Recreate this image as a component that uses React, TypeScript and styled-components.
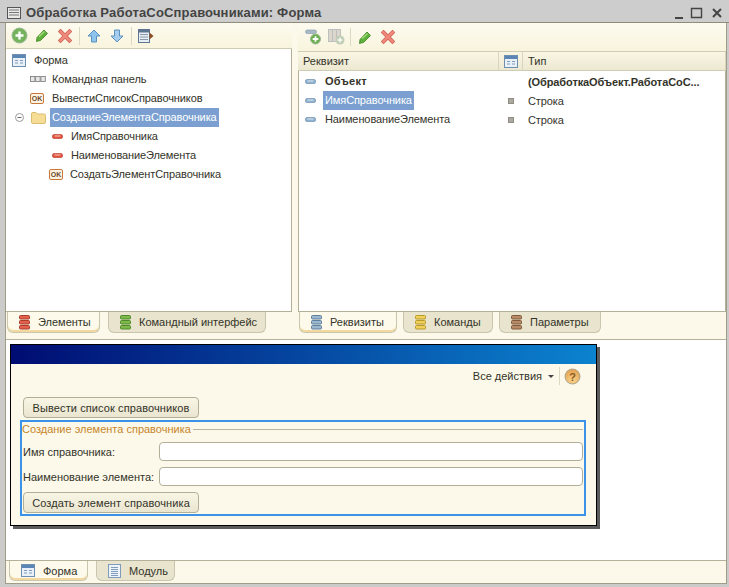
import styled, {createGlobalStyle} from 'styled-components';

const Global = createGlobalStyle`
  html, body { margin: 0; padding: 0; background: #c8c8c8; }
  body { font-family: "Liberation Sans", Arial, sans-serif; font-size: 11px; color: #333329; }
`;

const Win = styled.div`
  width: 729px;
  height: 587px;
  box-sizing: border-box;
  display: flex;
  flex-direction: column;
  background: #cbcbc9;
  overflow: hidden;
`;

const TitleBar = styled.div`
  height: 23px;
  flex: none;
  box-sizing: border-box;
  display: flex;
  align-items: center;
  gap: 5px;
  padding: 3px 6px 0 7px;
  background: #cdcdcd;
  border-bottom: 1px solid #8f8d7a;
`;

const TitleText = styled.div`
  flex: 1;
  font-size: 13px;
  font-weight: bold;
  letter-spacing: 0.17px;
  color: #444;
`;

const Body = styled.div`
  flex: 1;
  margin: 0 2px 3px 5px;
  display: flex;
  flex-direction: column;
  background: #fcf9ea;
  border: 1px solid #9f9d88;
  border-top: none;
  min-height: 0;
`;

const TopArea = styled.div`
  height: 317px;
  flex: none;
  display: flex;
  gap: 6px;
  box-sizing: border-box;
  border-bottom: 1px solid #b4b19b;
`;

const Panel = styled.div<{$w: number}>`
  width: ${({$w}) => $w}px;
  flex: none;
  display: flex;
  flex-direction: column;
`;

const Toolbar = styled.div<{$h: number; $pad: number}>`
  height: ${({$h}) => $h}px;
  flex: none;
  display: flex;
  align-items: center;
  gap: 5px;
  padding-left: ${({$pad}) => $pad}px;
  box-sizing: border-box;
  background: linear-gradient(#fdfbf0, #f8f4dd);
  border-bottom: 1px solid #cfccb4;
`;

const ToolBtn = styled.span`
  width: 18px;
  height: 18px;
  display: flex;
  align-items: center;
  justify-content: center;
`;

const Sep = styled.span`
  width: 1px;
  height: 18px;
  background: #dcd9c3;
`;

const ListBox = styled.div<{$left?: boolean}>`
  flex: 1;
  min-height: 0;
  background: #fff;
  border-right: 1px solid #b4b19b;
  border-bottom: 1px solid #b4b19b;
  border-left: ${({$left}) => ($left ? '1px solid #b4b19b' : 'none')};
  padding-top: ${({$left}) => ($left ? 1 : 2)}px;
  letter-spacing: -0.1px;
`;

const Row = styled.div<{$indent: number}>`
  height: 19px;
  display: flex;
  align-items: center;
  padding-left: ${({$indent}) => $indent}px;
  font-size: 11px;
  white-space: nowrap;
`;

const IconSlot = styled.span<{$w: number}>`
  width: ${({$w}) => $w}px;
  flex: none;
  display: flex;
  align-items: center;
`;

const Label = styled.span<{$selected?: boolean; $bold?: boolean}>`
  height: 19px;
  line-height: 19px;
  padding: 0 2px;
  font-weight: ${({$bold}) => ($bold ? 'bold' : 'normal')};
  letter-spacing: ${({$bold}) => ($bold ? '0.3px' : 'inherit')};
  color: ${({$selected}) => ($selected ? '#fff' : 'inherit')};
  background: ${({$selected}) => ($selected ? '#7a9fd0' : 'transparent')};
`;

const TabStrip = styled.div<{$gap: number}>`
  height: 21px;
  margin-bottom: 6px;
  flex: none;
  display: flex;
  gap: ${({$gap}) => $gap}px;
  padding-left: 1px;
`;

const Tab = styled.div<{$active?: boolean; $w: number}>`
  width: ${({$w}) => $w}px;
  height: 100%;
  box-sizing: border-box;
  display: flex;
  align-items: center;
  gap: 8px;
  padding-left: 11px;
  font-size: 11px;
  border: 1px solid #c9c6ae;
  border-top: none;
  border-radius: 0 0 6px 6px;
  background: ${({$active}) => ($active ? '#fdfaeb' : '#e9e4cd')};
  box-shadow: ${({$active}) => ($active ? 'inset 0 -2px 0 #f3d9a0' : 'none')};
`;

const ColumnHead = styled.div`
  height: 19px;
  flex: none;
  display: flex;
  align-items: center;
  background: linear-gradient(#f9f6e4, #ece8d1);
  border-bottom: 1px solid #cfccb4;
  font-size: 11px;
  box-sizing: border-box;
`;

const HeadCell = styled.div<{$w?: number}>`
  width: ${({$w}) => ($w ? `${$w}px` : 'auto')};
  flex: ${({$w}) => ($w ? 'none' : '1')};
  height: 100%;
  display: flex;
  align-items: center;
  padding-left: 5px;
  box-sizing: border-box;
  border-right: 1px solid #d8d5bf;
`;

const AttrRow = styled.div`
  height: 19px;
  display: flex;
  align-items: center;
  white-space: nowrap;
`;

const AttrName = styled.div`
  width: 206px;
  flex: none;
  display: flex;
  align-items: center;
  padding-left: 6px;
  box-sizing: border-box;
`;

const AttrType = styled.div<{$bold?: boolean}>`
  display: flex;
  align-items: center;
  font-weight: ${({$bold}) => ($bold ? 'bold' : 'normal')};
`;

const Square = styled.span`
  width: 6px;
  height: 6px;
  flex: none;
  margin: 0 14px 0 3px;
  background: #aaa89f;
  border: 1px solid #8f8d84;
  box-sizing: border-box;
`;

const EmptyType = styled.span`
  width: 23px;
  flex: none;
`;

const Canvas = styled.div`
  flex: 1;
  min-height: 0;
  background: #fff;
  padding: 4px 0 0 4px;
  border-bottom: 1px solid #b4b19b;
`;

const Preview = styled.div`
  width: 587px;
  height: 182px;
  box-sizing: border-box;
  border: 1px solid #000;
  background: #fcf9ea;
  box-shadow: 3px 3px 0 #5c5c5c;
`;

const PreviewHead = styled.div`
  height: 19px;
  background: linear-gradient(90deg, #000c72, #0b83cf);
`;

const PreviewBar = styled.div`
  height: 24px;
  display: flex;
  align-items: center;
  justify-content: flex-end;
  gap: 4px;
  padding-right: 15px;
  font-size: 11px;
`;

const Caret = styled.span`
  width: 0;
  height: 0;
  margin: 0 1px 0 2px;
  border: 3px solid transparent;
  border-top: 3px solid #444;
  border-bottom: none;
`;

const PreviewBody = styled.div`
  padding: 9px 10px 0 9px;
`;

const FormBtn = styled.div<{$indent: number}>`
  width: 176px;
  height: 21px;
  margin-left: ${({$indent}) => $indent}px;
  box-sizing: border-box;
  display: flex;
  align-items: center;
  justify-content: center;
  flex: none;
  font-size: 11px;
  letter-spacing: 0.1px;
  border: 1px solid #b2af98;
  border-radius: 4px;
  background: linear-gradient(#f9f6e6, #e9e5cf);
`;

const Group = styled.div`
  margin-top: 2px;
  height: 96px;
  box-sizing: border-box;
  border: 2px solid #3a93e8;
  padding: 0 1px;
  display: flex;
  flex-direction: column;
`;

const GroupTitle = styled.div`
  height: 14px;
  margin: 0 0 3px -1px;
  flex: none;
  display: flex;
  align-items: center;
  gap: 2px;
  color: #c7852a;
  font-size: 11px;
  white-space: nowrap;
  &::after {
    content: '';
    flex: 1;
    height: 1px;
    background: #b9b69f;
  }
`;

const FieldRow = styled.div`
  height: 25px;
  flex: none;
  display: flex;
  align-items: center;
  font-size: 11px;
  white-space: nowrap;
`;

const FieldLabel = styled.div`
  width: 136px;
  flex: none;
`;

const FieldInput = styled.div`
  flex: 1;
  height: 19px;
  box-sizing: border-box;
  background: #fff;
  border: 1px solid #b2af98;
  border-radius: 4px;
`;

const LastBtn = styled(FormBtn)`
  margin-top: 3px;
`;

const Bottom = styled.div`
  height: 22px;
  flex: none;
  box-sizing: border-box;
  display: flex;
  gap: 8px;
  padding: 0 0 2px 3px;
`;

function Lines({c1, c2}: {c1: string; c2: string}) {
  return (
    <svg width="11" height="15" viewBox="0 0 11 15">
      {[1, 6, 11].map(y => (
        <rect key={y} x="0.5" y={y - 0.5} width="10" height="3.5" rx="1" fill={c1} stroke={c2} />
      ))}
    </svg>
  );
}

function FormIcon() {
  return (
    <svg width="14" height="13" viewBox="0 0 14 13">
      <rect x="0.5" y="0.5" width="13" height="12" fill="#e9f0f8" stroke="#6f8fb0" />
      <rect x="1" y="1" width="12" height="3" fill="#5b86b4" />
      <path d="M3 6.5h3M8 6.5h3M3 9h3M8 9h3" stroke="#7f9cbc" />
    </svg>
  );
}

function ModuleIcon() {
  return (
    <svg width="13" height="14" viewBox="0 0 13 14">
      <rect x="0.5" y="0.5" width="12" height="13" fill="#eef3f9" stroke="#7f9cbc" />
      <path d="M3 3.5h7M3 5.5h7M3 7.5h7M3 9.5h7M3 11.5h7" stroke="#7f9cbc" />
    </svg>
  );
}

function Ok() {
  return (
    <svg width="14" height="11" viewBox="0 0 14 11">
      <rect x="0.5" y="0.5" width="13" height="10" rx="1.5" fill="#fdf3e2" stroke="#c9783a" />
      <text x="7" y="8" fontSize="7" fontWeight="bold" textAnchor="middle" fill="#6a4a30" fontFamily="Liberation Sans">OK</text>
    </svg>
  );
}

function Dash({color, edge}: {color: string; edge: string}) {
  return (
    <svg width="11" height="5" viewBox="0 0 11 5">
      <rect x="0.5" y="0.5" width="10" height="4" rx="1.5" fill={color} stroke={edge} strokeWidth="0.6" />
      <path d="M2.5 2h6" stroke="#fff" strokeOpacity="0.7" />
    </svg>
  );
}

function Pencil() {
  return (
    <svg width="14" height="15" viewBox="0 0 14 15">
      <path d="M3 13 L1.5 13.5 L2 9.5 L9 2 L12.5 5.5 L5.5 12.5 Z" fill="#5fb23c" stroke="#37801f" strokeWidth="0.8" />
      <path d="M4 8.5 L9.5 3.5" stroke="#a8dc7c" strokeWidth="1.2" />
    </svg>
  );
}

function Cross() {
  return (
    <svg width="14" height="14" viewBox="0 0 14 14">
      <path d="M2.5 2.5 L11.5 11.5 M11.5 2.5 L2.5 11.5" stroke="#d1695c" strokeWidth="4" strokeLinecap="square" />
      <path d="M2.5 2.5 L11.5 11.5 M11.5 2.5 L2.5 11.5" stroke="#f0897c" strokeWidth="2.4" strokeLinecap="square" />
    </svg>
  );
}

function Arrow({down}: {down?: boolean}) {
  return (
    <svg width="14" height="14" viewBox="0 0 14 14">
      <path
        d={down ? 'M4.5 1 H9.5 V7 H13 L7 13 L1 7 H4.5 Z' : 'M7 1 L13 7 H9.5 V13 H4.5 V7 H1 Z'}
        fill={down ? '#a7cdee' : '#8cc4ee'}
        stroke="#5b91bf"
      />
    </svg>
  );
}

function AddCircle() {
  return (
    <svg width="17" height="17" viewBox="0 0 17 17">
      <circle cx="8.5" cy="8.5" r="7.5" fill="#74b35c" stroke="#9cb894" />
      <path d="M8.5 4.5v8M4.5 8.5h8" stroke="#fff" strokeWidth="2.4" />
    </svg>
  );
}

function ListMenu() {
  return (
    <svg width="16" height="14" viewBox="0 0 16 14">
      <rect x="0.5" y="0.5" width="11" height="13" fill="#e6edf5" stroke="#5d7590" />
      <rect x="1" y="1" width="10" height="2.5" fill="#5d7590" />
      <path d="M2 5.5h8M2 8h8M2 10.5h8" stroke="#8b9aaa" />
      <path d="M11.5 3.5 L15.5 7 L11.5 10.5 Z" fill="#8a4a22" />
    </svg>
  );
}

function AddAttr() {
  return (
    <svg width="17" height="16" viewBox="0 0 17 16">
      <rect x="0.5" y="1" width="11" height="3.5" rx="1.7" fill="#a8bac8" stroke="#7f93a8" strokeWidth="0.6" />
      <circle cx="10.5" cy="10" r="5" fill="#6cae52" stroke="#9cb894" />
      <path d="M10.5 7.2v5.6M7.7 10h5.6" stroke="#fff" strokeWidth="1.8" />
    </svg>
  );
}

function AddTable() {
  return (
    <svg width="17" height="16" viewBox="0 0 17 16" opacity="0.7">
      <rect x="0.5" y="0.5" width="12" height="12" fill="#cfc9c2" stroke="#a2a9ae" />
      <path d="M4.5 1v11M8.5 1v11" stroke="#a2a9ae" />
      <circle cx="12" cy="11" r="4.5" fill="#a9bda2" />
      <path d="M12 8.6v4.8M9.6 11h4.8" stroke="#fff" strokeWidth="1.4" />
    </svg>
  );
}

function Help() {
  return (
    <svg width="17" height="17" viewBox="0 0 17 17">
      <defs>
        <radialGradient id="helpFill" cx="0.5" cy="0.75" r="0.8">
          <stop offset="0" stopColor="#fbd58f" />
          <stop offset="1" stopColor="#e09a48" />
        </radialGradient>
      </defs>
      <circle cx="8.5" cy="8.5" r="7.5" fill="url(#helpFill)" stroke="#a9a48d" />
      <text x="8.5" y="12.5" fontSize="11" fontWeight="bold" textAnchor="middle" fill="#8a5a20" fontFamily="Liberation Sans">?</text>
    </svg>
  );
}

function Folder() {
  return (
    <svg width="15" height="12" viewBox="0 0 15 12">
      <path d="M0.5 2 Q0.5 0.5 2 0.5 H5 L6.5 2 H13 Q14.5 2 14.5 3.5 V10 Q14.5 11.5 13 11.5 H2 Q0.5 11.5 0.5 10 Z" fill="#f6dd95" stroke="#d9bd6c" />
    </svg>
  );
}

function Collapse() {
  return (
    <svg width="9" height="9" viewBox="0 0 9 9">
      <circle cx="4.5" cy="4.5" r="4" fill="#fff" stroke="#9a9a9a" />
      <path d="M2.5 4.5h4" stroke="#666" />
    </svg>
  );
}

function Panelette() {
  return (
    <svg width="16" height="7" viewBox="0 0 16 7">
      {[0.5, 5.7, 10.9].map(x => (
        <rect key={x} x={x} y="0.5" width="4.4" height="5" fill="#e8e8e8" stroke="#777" strokeWidth="0.8" />
      ))}
    </svg>
  );
}

export default function App() {
  return (
    <Win>
      <Global />
      <TitleBar>
        <svg width="14" height="12" viewBox="0 0 14 12">
          <rect x="0.5" y="0.5" width="13" height="11" fill="#e8e8e8" stroke="#555" />
          <path d="M2 3h10M2 5.5h10M2 8h10" stroke="#777" />
        </svg>
        <TitleText>Обработка РаботаСоСправочниками: Форма</TitleText>
        <svg width="49" height="14" viewBox="0 0 49 14">
          <path d="M1 12h8" stroke="#444" strokeWidth="2" />
          <path d="M17.5 2.5h10v9h-10z" fill="none" stroke="#444" strokeWidth="1.4" />
          <path d="M39 3l8 8M47 3l-8 8" stroke="#444" strokeWidth="2" />
        </svg>
      </TitleBar>
      <Body>
        <TopArea>
          <Panel $w={286}>
            <Toolbar $h={26} $pad={4}>
              <ToolBtn><AddCircle /></ToolBtn>
              <ToolBtn><Pencil /></ToolBtn>
              <ToolBtn><Cross /></ToolBtn>
              <Sep />
              <ToolBtn><Arrow /></ToolBtn>
              <ToolBtn><Arrow down /></ToolBtn>
              <Sep />
              <ToolBtn><ListMenu /></ToolBtn>
            </Toolbar>
            <ListBox>
              <Row $indent={6}><IconSlot $w={20}><FormIcon /></IconSlot><Label>Форма</Label></Row>
              <Row $indent={24}><IconSlot $w={20}><Panelette /></IconSlot><Label>Командная панель</Label></Row>
              <Row $indent={24}><IconSlot $w={20}><Ok /></IconSlot><Label>ВывестиСписокСправочников</Label></Row>
              <Row $indent={9}>
                <IconSlot $w={16}><Collapse /></IconSlot>
                <IconSlot $w={19}><Folder /></IconSlot>
                <Label $selected>СозданиеЭлементаСправочника</Label>
              </Row>
              <Row $indent={46}><IconSlot $w={17}><Dash color="#e2503c" edge="#b83c2c" /></IconSlot><Label>ИмяСправочника</Label></Row>
              <Row $indent={46}><IconSlot $w={17}><Dash color="#e2503c" edge="#b83c2c" /></IconSlot><Label>НаименованиеЭлемента</Label></Row>
              <Row $indent={43}><IconSlot $w={19}><Ok /></IconSlot><Label>СоздатьЭлементСправочника</Label></Row>
            </ListBox>
            <TabStrip $gap={8}>
              <Tab $active $w={93}><Lines c1="#e2604c" c2="#a93c2c" />Элементы</Tab>
              <Tab $w={158}><Lines c1="#7fb84a" c2="#4f8a2a" />Командный интерфейс</Tab>
            </TabStrip>
          </Panel>
          <Panel $w={428}>
            <Toolbar $h={29} $pad={6}>
              <ToolBtn><AddAttr /></ToolBtn>
              <ToolBtn><AddTable /></ToolBtn>
              <Sep />
              <ToolBtn><Pencil /></ToolBtn>
              <ToolBtn><Cross /></ToolBtn>
            </Toolbar>
            <ColumnHead>
              <HeadCell $w={201}>Реквизит</HeadCell>
              <HeadCell $w={24}><FormIcon /></HeadCell>
              <HeadCell>Тип</HeadCell>
            </ColumnHead>
            <ListBox $left>
              <AttrRow>
                <AttrName>
                  <IconSlot $w={18}><Dash color="#8fb2cf" edge="#5f87a8" /></IconSlot>
                  <Label $bold>Объект</Label>
                </AttrName>
                <EmptyType />
                <AttrType $bold>(ОбработкаОбъект.РаботаСоС...</AttrType>
              </AttrRow>
              <AttrRow>
                <AttrName>
                  <IconSlot $w={18}><Dash color="#8fb2cf" edge="#5f87a8" /></IconSlot>
                  <Label $selected>ИмяСправочника</Label>
                </AttrName>
                <AttrType><Square />Строка</AttrType>
              </AttrRow>
              <AttrRow>
                <AttrName>
                  <IconSlot $w={18}><Dash color="#8fb2cf" edge="#5f87a8" /></IconSlot>
                  <Label>НаименованиеЭлемента</Label>
                </AttrName>
                <AttrType><Square />Строка</AttrType>
              </AttrRow>
            </ListBox>
            <TabStrip $gap={6}>
              <Tab $active $w={98}><Lines c1="#9ab8d0" c2="#5f7f9a" />Реквизиты</Tab>
              <Tab $w={90}><Lines c1="#f0cf5a" c2="#b89a2c" />Команды</Tab>
              <Tab $w={102}><Lines c1="#b98a66" c2="#7f5a3c" />Параметры</Tab>
            </TabStrip>
          </Panel>
        </TopArea>
        <Canvas>
          <Preview>
            <PreviewHead />
            <PreviewBar>
              Все действия
              <Caret />
              <Sep />
              <Help />
            </PreviewBar>
            <PreviewBody>
              <FormBtn $indent={3}>Вывести список справочников</FormBtn>
              <Group>
                <GroupTitle>Создание элемента справочника</GroupTitle>
                <FieldRow><FieldLabel>Имя справочника:</FieldLabel><FieldInput /></FieldRow>
                <FieldRow><FieldLabel>Наименование элемента:</FieldLabel><FieldInput /></FieldRow>
                <LastBtn $indent={0}>Создать элемент справочника</LastBtn>
              </Group>
            </PreviewBody>
          </Preview>
        </Canvas>
        <Bottom>
          <Tab $active $w={79}><FormIcon />Форма</Tab>
          <Tab $w={79}><ModuleIcon />Модуль</Tab>
        </Bottom>
      </Body>
    </Win>
  );
}
